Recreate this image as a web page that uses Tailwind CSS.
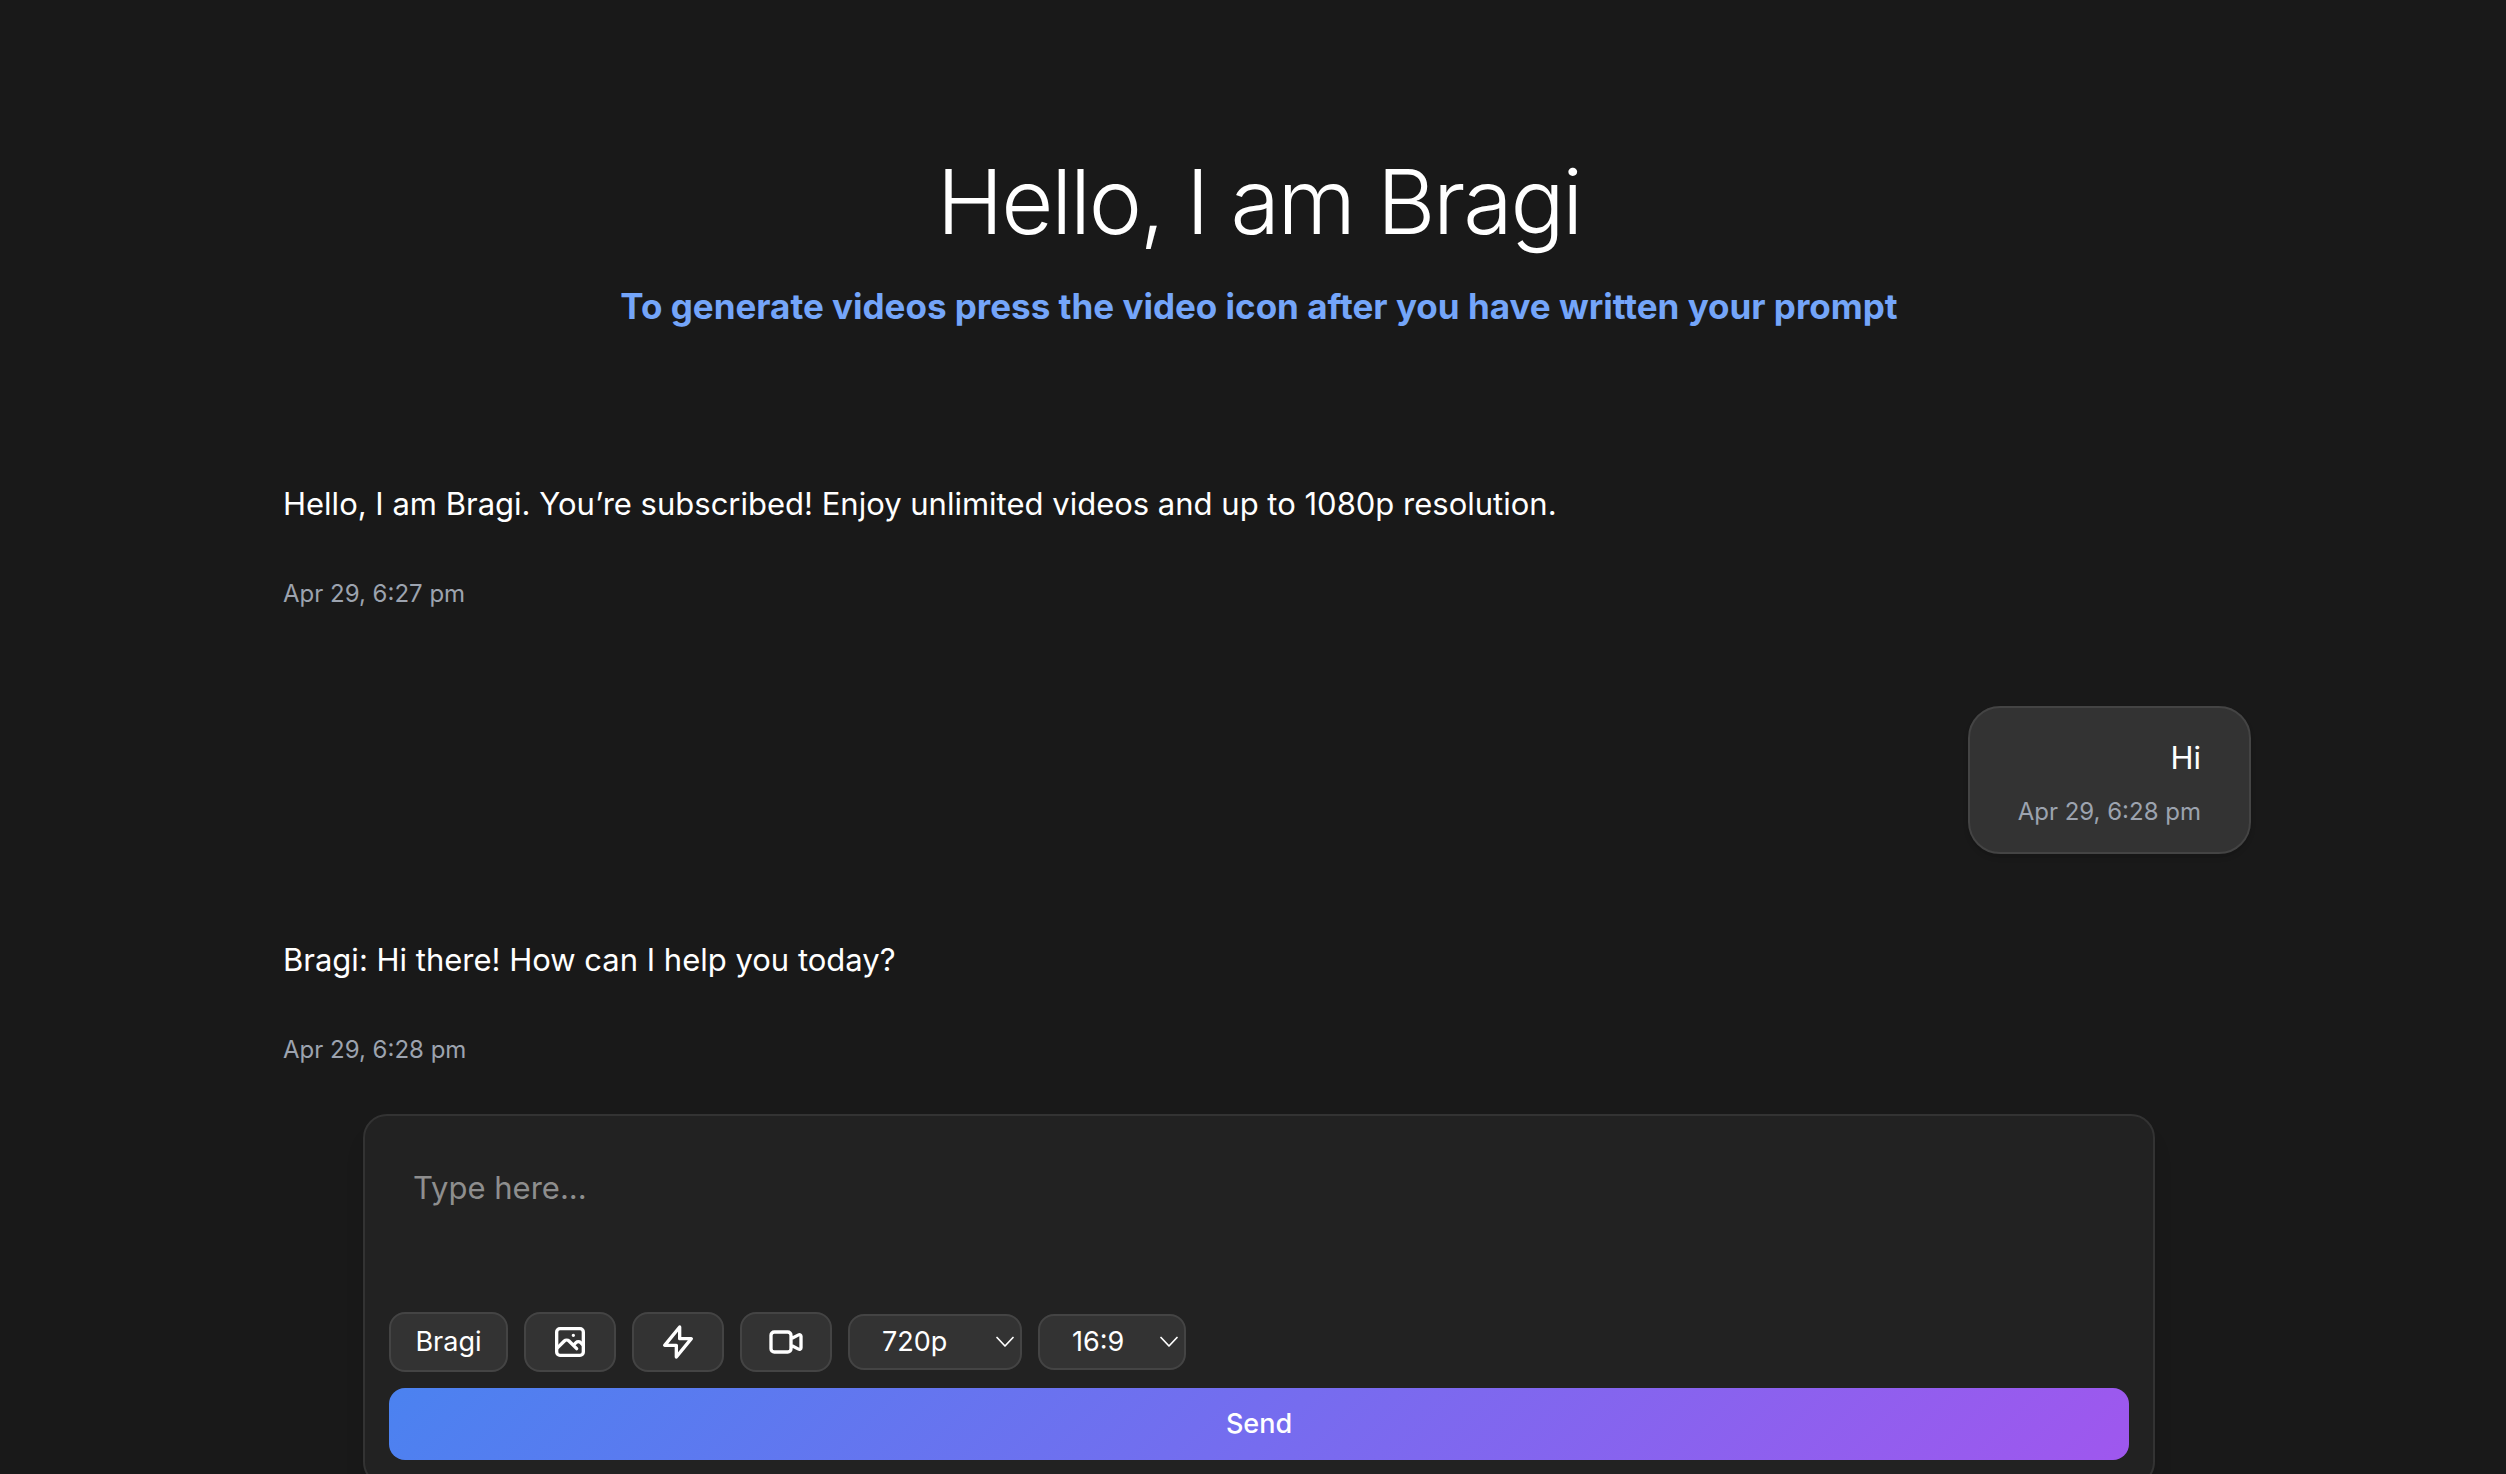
<!DOCTYPE html>
<html lang="en">
<head>
  <meta charset="UTF-8" />
  <meta name="viewport" content="width=device-width, initial-scale=1.0"/>
  <title>Bragi</title>
  <script src="https://cdn.jsdelivr.net/npm/@tailwindcss/browser@4"></script>
</head>
<body class="bg-[#191919] text-white font-['Inter',sans-serif]">

  <div class="h-screen overflow-y-auto [scrollbar-width:none] flex flex-col pl-3">

    <!-- Header -->
    <header class="text-center pt-36 shrink-0">
      <h1 class="text-[90px] leading-[116px] font-light tracking-tight">Hello, I am Bragi</h1>
      <p class="mt-5 text-[35px] leading-[52px] font-bold text-[#74a5f9]">To generate videos press the video icon after you have written your prompt</p>
    </header>

    <!-- Messages -->
    <main class="w-full max-w-[1984px] mx-auto pt-[146px] flex flex-col shrink-0">
      <article class="px-4">
        <p class="text-[31px] leading-[52px]">Hello, I am Bragi. You’re subscribed! Enjoy unlimited videos and up to 1080p resolution.</p>
        <time class="block mt-12 text-[24px] leading-8 text-[#9ca3af]">Apr 29, 6:27 pm</time>
      </article>

      <article class="self-end mt-24 px-12 py-6 rounded-[32px] border-2 border-[#444] bg-[#333] text-right shadow-md">
        <p class="text-[31px] leading-[52px]">Hi</p>
        <time class="block mt-3 text-[24px] leading-8 text-[#9ca3af]">Apr 29, 6:28 pm</time>
      </article>

      <article class="mt-20 px-4">
        <p class="text-[31px] leading-[52px]">Bragi: Hi there! How can I help you today?</p>
        <time class="block mt-12 text-[24px] leading-8 text-[#9ca3af]">Apr 29, 6:28 pm</time>
      </article>
    </main>

    <!-- Composer -->
    <form class="w-full max-w-[1792px] mx-auto mt-12 p-6 rounded-3xl border-2 border-[#333] bg-[#222] shadow-xl shrink-0">
      <textarea aria-label="Message" placeholder="Type here..." class="block w-full h-40 px-6 py-6 text-[31px] leading-[48px] resize-none bg-transparent placeholder:text-[#8e8e8e] outline-none"></textarea>

      <div class="mt-3 flex items-center gap-4 text-[27px]">
        <button type="button" class="h-[60px] w-[119px] rounded-2xl border-2 border-[#444] bg-[#333]">Bragi</button>
        <button type="button" aria-label="Add image" class="h-[60px] w-[92px] flex items-center justify-center rounded-2xl border-2 border-[#444] bg-[#333]">
          <svg class="size-10" viewBox="0 0 24 24" fill="none" stroke="currentColor" stroke-width="2" stroke-linecap="round" stroke-linejoin="round">
            <rect x="4" y="4" width="16" height="16" rx="2"/>
            <path d="m4 16 4.586-4.586a2 2 0 0 1 2.828 0L16 16m-2-2 1.586-1.586a2 2 0 0 1 2.828 0L20 14m-6-6h.01"/>
          </svg>
        </button>
        <button type="button" aria-label="Fast mode" class="h-[60px] w-[92px] flex items-center justify-center rounded-2xl border-2 border-[#444] bg-[#333]">
          <svg class="size-10" viewBox="0 0 24 24" fill="none" stroke="currentColor" stroke-width="2" stroke-linecap="round" stroke-linejoin="round">
            <path d="M13 10V3L4 14h7v7l9-11h-7z"/>
          </svg>
        </button>
        <button type="button" aria-label="Generate video" class="h-[60px] w-[92px] flex items-center justify-center rounded-2xl border-2 border-[#444] bg-[#333]">
          <svg class="size-10" viewBox="0 0 24 24" fill="none" stroke="currentColor" stroke-width="2" stroke-linecap="round" stroke-linejoin="round">
            <path d="m15 10 4.553-2.276A1 1 0 0 1 21 8.618v6.764a1 1 0 0 1-1.447.894L15 14M5 18h8a2 2 0 0 0 2-2V8a2 2 0 0 0-2-2H5a2 2 0 0 0-2 2v8a2 2 0 0 0 2 2z"/>
          </svg>
        </button>
        <div class="relative">
          <select aria-label="Resolution" class="block appearance-none h-14 w-[174px] pl-8 rounded-2xl border-2 border-[#444] bg-[#333]">
            <option>720p</option>
            <option>1080p</option>
          </select>
          <svg class="absolute right-2 top-1/2 -translate-y-1/2 w-[18px] h-3 pointer-events-none" viewBox="0 0 18 12" fill="none" stroke="currentColor" stroke-width="1.7" stroke-linecap="round" stroke-linejoin="round"><path d="m1 1.5 8 8.5 8-8.5"/></svg>
        </div>
        <div class="relative">
          <select aria-label="Aspect ratio" class="block appearance-none h-14 w-[148px] pl-8 rounded-2xl border-2 border-[#444] bg-[#333]">
            <option>16:9</option>
            <option>9:16</option>
          </select>
          <svg class="absolute right-2 top-1/2 -translate-y-1/2 w-[18px] h-3 pointer-events-none" viewBox="0 0 18 12" fill="none" stroke="currentColor" stroke-width="1.7" stroke-linecap="round" stroke-linejoin="round"><path d="m1 1.5 8 8.5 8-8.5"/></svg>
        </div>
      </div>

      <button type="submit" class="mt-4 block w-full h-[72px] rounded-2xl bg-[linear-gradient(135deg,#4b82f0,#9f57ee)] text-[27px] font-medium">Send</button>
    </form>

  </div>

</body>
</html>
